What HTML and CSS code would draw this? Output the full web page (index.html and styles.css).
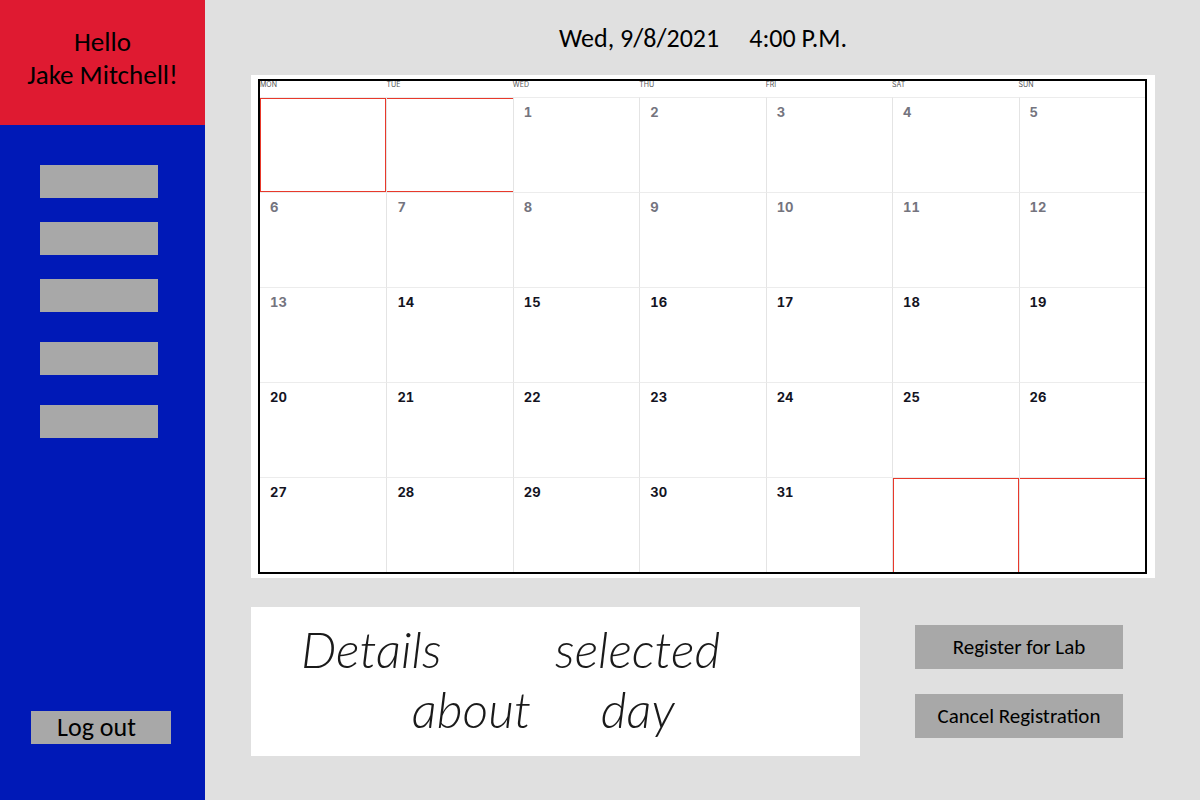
FILE: index.html
```html
<!DOCTYPE html>
<html lang="en">
<head>
<meta charset="utf-8">
<meta name="viewport" content="width=device-width, initial-scale=1">
<title>Lab calendar</title>
<link rel="stylesheet" href="styles.css">
</head>
<body>
<div class="app">
  <aside class="sidebar">
    <div class="greeting">Hello<br>Jake Mitchell!</div>
    <nav class="menu" aria-label="Main">
      <div class="menu-group menu-group-tight">
        <button class="menu-item" type="button" aria-label="Menu item 1"></button>
        <button class="menu-item" type="button" aria-label="Menu item 2"></button>
        <button class="menu-item" type="button" aria-label="Menu item 3"></button>
      </div>
      <div class="menu-group">
        <button class="menu-item" type="button" aria-label="Menu item 4"></button>
        <button class="menu-item" type="button" aria-label="Menu item 5"></button>
      </div>
    </nav>
    <button class="logout" type="button">Log out</button>
  </aside>
  <main class="content">
    <header class="clock"><span>Wed, 9/8/2021</span><span>4:00 P.M.</span></header>
    <section class="calendar-panel">
      <table class="calendar">
        <thead>
          <tr><th>MON</th><th>TUE</th><th>WED</th><th>THU</th><th>FRI</th><th>SAT</th><th>SUN</th></tr>
        </thead>
        <tbody>
          <tr class="past"><td class="blank-start"></td><td class="blank-mid"></td><td>1</td><td>2</td><td>3</td><td>4</td><td>5</td></tr>
          <tr class="past"><td>6</td><td>7</td><td>8</td><td>9</td><td>10</td><td>11</td><td>12</td></tr>
          <tr><td class="past">13</td><td>14</td><td>15</td><td>16</td><td>17</td><td>18</td><td>19</td></tr>
          <tr><td>20</td><td>21</td><td>22</td><td>23</td><td>24</td><td>25</td><td>26</td></tr>
          <tr><td>27</td><td>28</td><td>29</td><td>30</td><td>31</td><td class="blank-next"></td><td class="blank-end"></td></tr>
        </tbody>
      </table>
    </section>
    <section class="bottom">
      <div class="details">
        <p class="note note-staggered"><span>Details</span> <span>about</span></p>
        <p class="note"><span>selected</span> <span>day</span></p>
      </div>
      <div class="actions">
        <button class="action" type="button">Register for Lab</button>
        <button class="action" type="button">Cancel Registration</button>
      </div>
    </section>
  </main>
</div>
</body>
</html>
```
FILE: styles.css
```css
* { box-sizing: border-box; }

body {
  margin: 0;
  background: #e0e0e0;
  color: #000;
  font-family: Carlito, Calibri, Lato, sans-serif;
}

button {
  border: 0;
  padding: 0;
  background: #a8a8a8;
  color: inherit;
  font: inherit;
  cursor: pointer;
}

.app {
  display: grid;
  grid-template-columns: 205px 1fr;
  min-height: 100vh;
}

.sidebar {
  display: flex;
  flex-direction: column;
  align-items: flex-start;
  padding-bottom: 56px;
  background: #0019b7;
}

.greeting {
  align-self: stretch;
  padding: 25px 0 34px;
  background: #df1a31;
  font-size: 27px;
  line-height: 33px;
  text-align: center;
}

.menu {
  display: flex;
  flex-direction: column;
  gap: 30px;
  width: 118px;
  margin: 40px;
}

.menu-group {
  display: flex;
  flex-direction: column;
  gap: 30px;
}

.menu-group-tight { gap: 24px; }

.menu-item { height: 33px; }

.logout {
  width: 140px;
  margin-top: auto;
  margin-left: 31px;
  padding: 0 26px;
  font-size: 26px;
  line-height: 33px;
  text-align: left;
}

.content { padding: 0 45px 44px 46px; }

.clock {
  display: flex;
  justify-content: center;
  gap: 30px;
  padding: 22px 0 20px;
  font-size: 26px;
  line-height: 33px;
}

.calendar-panel {
  padding: 4px 8px 4px 7px;
  background: #fff;
}

.calendar {
  width: 100%;
  table-layout: fixed;
  border: 2px solid #000;
  border-collapse: separate;
  border-spacing: 0;
  font-family: Inter, "Liberation Sans", sans-serif;
}

.calendar th {
  height: 16px;
  padding: 0;
  color: #555;
  font-size: 7px;
  font-weight: 400;
  line-height: 7px;
  text-align: left;
  vertical-align: top;
}

.calendar td {
  height: 95px;
  padding: 6px 10px;
  border-top: 1px solid #ececec;
  border-left: 1px solid #e4e4e4;
  color: #14141f;
  font-size: 13px;
  font-variant-numeric: tabular-nums;
  font-weight: 700;
  line-height: 16px;
  vertical-align: top;
}

.calendar td:first-child { border-left: 0; }

.calendar .past td,
.calendar td.past { color: #74747e; }

.calendar .blank-start { box-shadow: inset 0 0 0 1px #e8392b; }
.calendar .blank-mid { box-shadow: inset 0 1px #e8392b, inset 0 -1px #e8392b; }
.calendar .blank-next { box-shadow: inset 1px 1px #e8392b, inset -1px 0 #e8392b; }
.calendar .blank-end { box-shadow: inset 0 1px #e8392b; }

.bottom {
  display: flex;
  justify-content: space-between;
  margin-top: 29px;
}

.details {
  display: flex;
  flex: 0 1 609px;
  gap: 24px;
  min-height: 149px;
  padding: 12px 50px;
  background: #fff;
  color: #1a1a1a;
  font-family: Lato, sans-serif;
  font-size: 50px;
  font-style: italic;
  font-weight: 300;
  line-height: 60px;
}

.note {
  display: flex;
  flex-direction: column;
  align-items: center;
  margin: 0;
}

.note-staggered {
  flex: 0 1 230px;
  align-items: flex-start;
}

.note-staggered span:last-child { align-self: flex-end; }

.actions {
  display: flex;
  flex-direction: column;
  gap: 25px;
  width: 208px;
  margin: 18px 32px 0 0;
}

.action {
  height: 44px;
  font-size: 21px;
  line-height: 24px;
}
```
